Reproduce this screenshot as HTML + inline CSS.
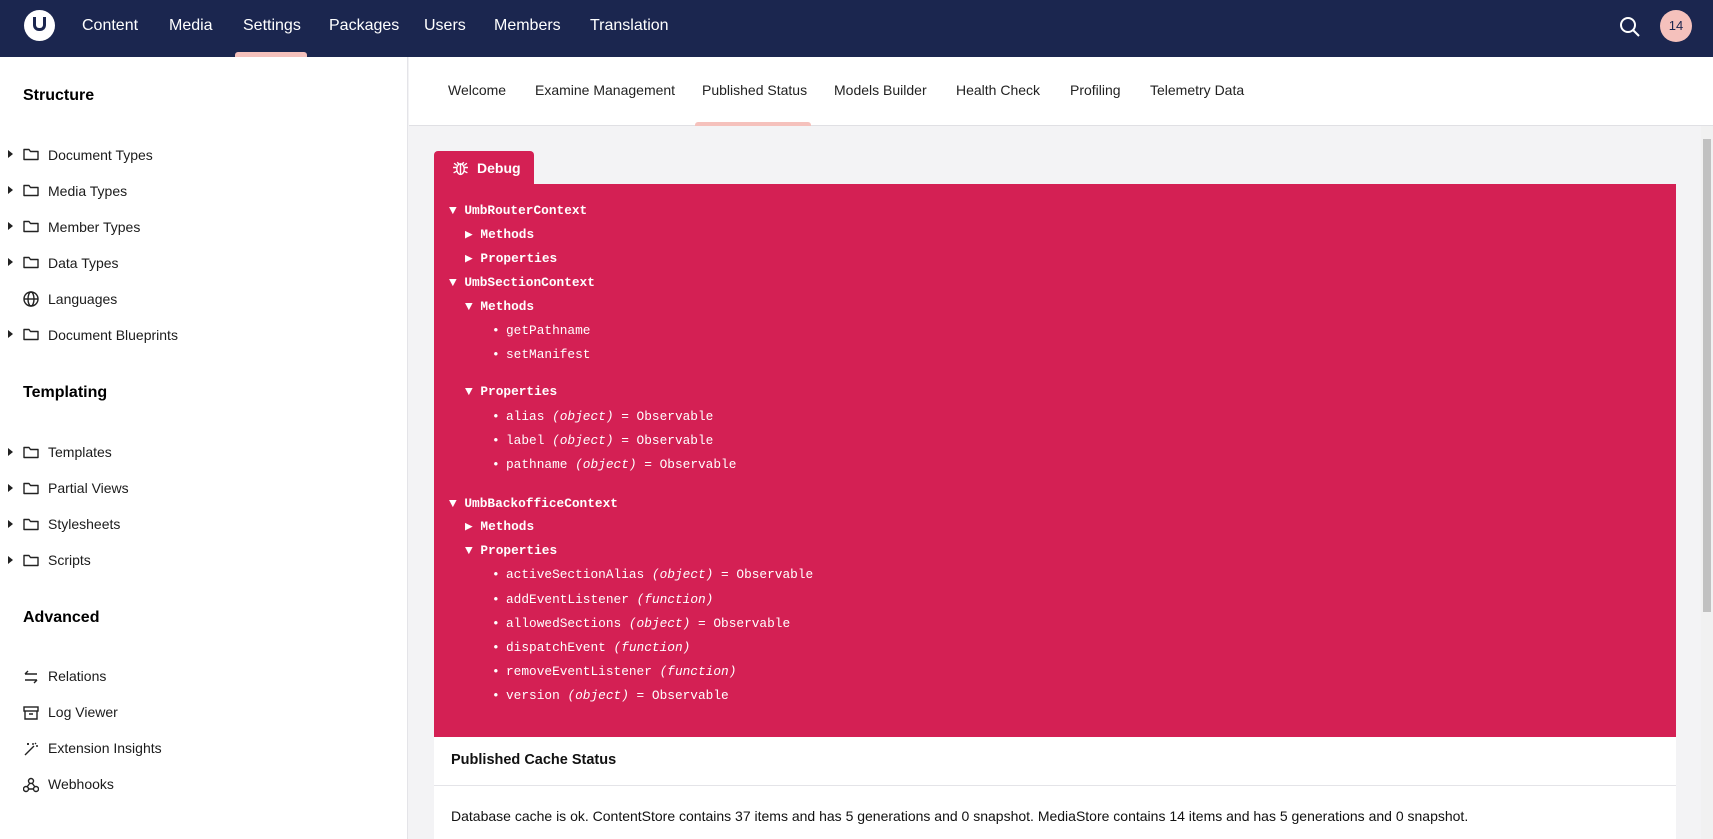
<!DOCTYPE html>
<html><head><meta charset="utf-8"><style>
*{margin:0;padding:0;box-sizing:border-box}
body{width:1713px;height:839px;overflow:hidden;background:#f3f3f5;font-family:"Liberation Sans",sans-serif;position:relative;color:#1b264f}
.a{position:absolute;white-space:nowrap}
#top{left:0;top:0;width:1713px;height:57px;background:#1b264f}
.nav{top:17px;color:#fff;font-size:16px}
#side{left:0;top:57px;width:408px;height:782px;background:#fff;border-right:1px solid #e4e4e8}
.h{left:23px;font-size:16px;font-weight:bold;color:#000}
.it{left:48px;font-size:14px;color:#1b1b1b}
.fo{left:23px;width:16px;height:13px}
.ar{left:8px;width:0;height:0;border-top:4px solid transparent;border-bottom:4px solid transparent;border-left:5px solid #222}
#tabs{left:409px;top:57px;width:1304px;height:69px;background:#fff;border-bottom:1px solid #e0e0e4}
.tb{top:82px;font-size:14px;color:#222}
#red{left:434px;top:184px;width:1242px;height:553px;background:#d42054}
.m{font-family:"Liberation Mono","DejaVu Sans Mono",monospace;font-size:12.8px;color:#fff}
.b{font-weight:bold}
.d{position:absolute;left:-14px}
</style></head><body>
<svg width="0" height="0" style="position:absolute"><defs><symbol id="f" viewBox="0 0 16 13"><path d="M1 2.5V11.5H15V3.5H7.5L6 1.5H1Z" fill="none" stroke="#222" stroke-width="1.4" stroke-linejoin="round"/></symbol></defs></svg>
<div class="a" id="top"></div>
<div class="a" style="left:24px;top:10px;width:31px;height:31px;border-radius:50%;background:#fff"></div>
<div class="a" style="left:33px;top:17px;width:13px;height:14px;border:3px solid #1b264f;border-top:none;border-radius:0 0 6px 6px"></div>
<div class="a nav" style="left:82px">Content</div>
<div class="a nav" style="left:169px">Media</div>
<div class="a nav" style="left:243px">Settings</div>
<div class="a nav" style="left:329px">Packages</div>
<div class="a nav" style="left:424px">Users</div>
<div class="a nav" style="left:494px">Members</div>
<div class="a nav" style="left:590px">Translation</div>
<div class="a" style="left:235px;top:52px;width:72px;height:5px;background:#f5c1bc;border-radius:3px 3px 0 0"></div>
<svg class="a" style="left:1619px;top:16px" width="22" height="22" viewBox="0 0 22 22"><circle cx="9" cy="9" r="7" fill="none" stroke="#fff" stroke-width="2"/><line x1="14" y1="14" x2="20" y2="20" stroke="#fff" stroke-width="2"/></svg>
<div class="a" style="left:1660px;top:10px;width:32px;height:32px;border-radius:50%;background:#f5c1bc;color:#1b264f;font-size:13px;text-align:center;line-height:32px">14</div>

<div class="a" id="side"></div>
<div class="a h" style="top:87px">Structure</div>
<div class="a h" style="top:384px">Templating</div>
<div class="a h" style="top:609px">Advanced</div>

<div class="a ar" style="top:150px"></div><svg class="a fo" style="top:148px"><use href="#f"/></svg><div class="a it" style="top:147px">Document Types</div>
<div class="a ar" style="top:186px"></div><svg class="a fo" style="top:184px"><use href="#f"/></svg><div class="a it" style="top:183px">Media Types</div>
<div class="a ar" style="top:222px"></div><svg class="a fo" style="top:220px"><use href="#f"/></svg><div class="a it" style="top:219px">Member Types</div>
<div class="a ar" style="top:258px"></div><svg class="a fo" style="top:256px"><use href="#f"/></svg><div class="a it" style="top:255px">Data Types</div>
<svg class="a" style="left:23px;top:291px" width="16" height="16" viewBox="0 0 16 16" fill="none" stroke="#222" stroke-width="1.4"><circle cx="8" cy="8" r="7"/><ellipse cx="8" cy="8" rx="3" ry="7"/><line x1="1" y1="8" x2="15" y2="8"/></svg><div class="a it" style="top:291px">Languages</div>
<div class="a ar" style="top:330px"></div><svg class="a fo" style="top:328px"><use href="#f"/></svg><div class="a it" style="top:327px">Document Blueprints</div>

<div class="a ar" style="top:448px"></div><svg class="a fo" style="top:446px"><use href="#f"/></svg><div class="a it" style="top:444px">Templates</div>
<div class="a ar" style="top:484px"></div><svg class="a fo" style="top:482px"><use href="#f"/></svg><div class="a it" style="top:480px">Partial Views</div>
<div class="a ar" style="top:520px"></div><svg class="a fo" style="top:518px"><use href="#f"/></svg><div class="a it" style="top:516px">Stylesheets</div>
<div class="a ar" style="top:556px"></div><svg class="a fo" style="top:554px"><use href="#f"/></svg><div class="a it" style="top:552px">Scripts</div>

<svg class="a" style="left:23px;top:669px" width="16" height="16" viewBox="0 0 16 16" fill="none" stroke="#222" stroke-width="1.4"><path d="M2 5h12M2 5l3-3M14 11H2M14 11l-3 3"/></svg><div class="a it" style="top:668px">Relations</div>
<svg class="a" style="left:23px;top:705px" width="16" height="16" viewBox="0 0 16 16" fill="none" stroke="#222" stroke-width="1.4"><rect x="1" y="2" width="14" height="4"/><path d="M2 6v8h12V6M6 9h4"/></svg><div class="a it" style="top:704px">Log Viewer</div>
<svg class="a" style="left:23px;top:741px" width="16" height="16" viewBox="0 0 16 16" fill="none" stroke="#222" stroke-width="1.4"><path d="M2 14L11 5M10 2v2M13 5h2M12 2l1 1M5 2v2M4 3h2"/></svg><div class="a it" style="top:740px">Extension Insights</div>
<svg class="a" style="left:23px;top:777px" width="16" height="16" viewBox="0 0 16 16" fill="none" stroke="#222" stroke-width="1.4"><circle cx="8" cy="4" r="2.5"/><circle cx="3" cy="12" r="2.5"/><circle cx="13" cy="12" r="2.5"/><path d="M7 6l-3 4M5.5 12h5M9 6l3 4"/></svg><div class="a it" style="top:776px">Webhooks</div>

<div class="a" id="tabs"></div>
<div class="a tb" style="left:448px">Welcome</div>
<div class="a tb" style="left:535px">Examine Management</div>
<div class="a tb" style="left:702px">Published Status</div>
<div class="a tb" style="left:834px">Models Builder</div>
<div class="a tb" style="left:956px">Health Check</div>
<div class="a tb" style="left:1070px">Profiling</div>
<div class="a tb" style="left:1150px">Telemetry Data</div>
<div class="a" style="left:695px;top:122px;width:116px;height:4px;background:#f5c1bc;border-radius:3px 3px 0 0"></div>

<div class="a" style="left:434px;top:151px;width:100px;height:34px;background:#d42054;border-radius:4px 4px 0 0"></div>
<svg class="a" style="left:452px;top:159px" width="17" height="17" viewBox="0 0 16 16" fill="none" stroke="#fff" stroke-width="1.3"><ellipse cx="8" cy="9.5" rx="3.5" ry="5"/><path d="M8 5v10M5 3l1.5 2M11 3l-1.5 2M1 8h3.5M11.5 8H15M1.5 13l3-1.5M14.5 13l-3-1.5M2 4l2.5 2M14 4l-2.5 2"/></svg>
<div class="a m b" style="left:477px;top:160px;font-family:'Liberation Sans',sans-serif;font-size:14px">Debug</div>
<div class="a" id="red"></div>

<div class="a m b" style="left:449px;top:203px">▼ UmbRouterContext</div>
<div class="a m b" style="left:465px;top:227px">▶ Methods</div>
<div class="a m b" style="left:465px;top:251px">▶ Properties</div>
<div class="a m b" style="left:449px;top:275px">▼ UmbSectionContext</div>
<div class="a m b" style="left:465px;top:299px">▼ Methods</div>
<div class="a m" style="left:506px;top:323px"><span class="d">•</span>getPathname</div>
<div class="a m" style="left:506px;top:347px"><span class="d">•</span>setManifest</div>
<div class="a m b" style="left:465px;top:384px">▼ Properties</div>
<div class="a m" style="left:506px;top:409px"><span class="d">•</span>alias <i>(object)</i> = Observable</div>
<div class="a m" style="left:506px;top:433px"><span class="d">•</span>label <i>(object)</i> = Observable</div>
<div class="a m" style="left:506px;top:457px"><span class="d">•</span>pathname <i>(object)</i> = Observable</div>
<div class="a m b" style="left:449px;top:496px">▼ UmbBackofficeContext</div>
<div class="a m b" style="left:465px;top:519px">▶ Methods</div>
<div class="a m b" style="left:465px;top:543px">▼ Properties</div>
<div class="a m" style="left:506px;top:567px"><span class="d">•</span>activeSectionAlias <i>(object)</i> = Observable</div>
<div class="a m" style="left:506px;top:592px"><span class="d">•</span>addEventListener <i>(function)</i></div>
<div class="a m" style="left:506px;top:616px"><span class="d">•</span>allowedSections <i>(object)</i> = Observable</div>
<div class="a m" style="left:506px;top:640px"><span class="d">•</span>dispatchEvent <i>(function)</i></div>
<div class="a m" style="left:506px;top:664px"><span class="d">•</span>removeEventListener <i>(function)</i></div>
<div class="a m" style="left:506px;top:688px"><span class="d">•</span>version <i>(object)</i> = Observable</div>

<div class="a" style="left:434px;top:737px;width:1242px;height:102px;background:#fff"></div>
<div class="a" style="left:434px;top:785px;width:1242px;height:1px;background:#e4e4e8"></div>
<div class="a" style="left:451px;top:752px;font-size:14.5px;font-weight:bold;color:#111">Published Cache Status</div>
<div class="a" style="left:451px;top:808px;font-size:14px;color:#111">Database cache is ok. ContentStore contains 37 items and has 5 generations and 0 snapshot. MediaStore contains 14 items and has 5 generations and 0 snapshot.</div>

<div class="a" style="left:1701px;top:126px;width:12px;height:713px;background:#f1f1f1"></div>
<div class="a" style="left:1703px;top:139px;width:8px;height:473px;background:#c1c1c1"></div>
</body></html>
